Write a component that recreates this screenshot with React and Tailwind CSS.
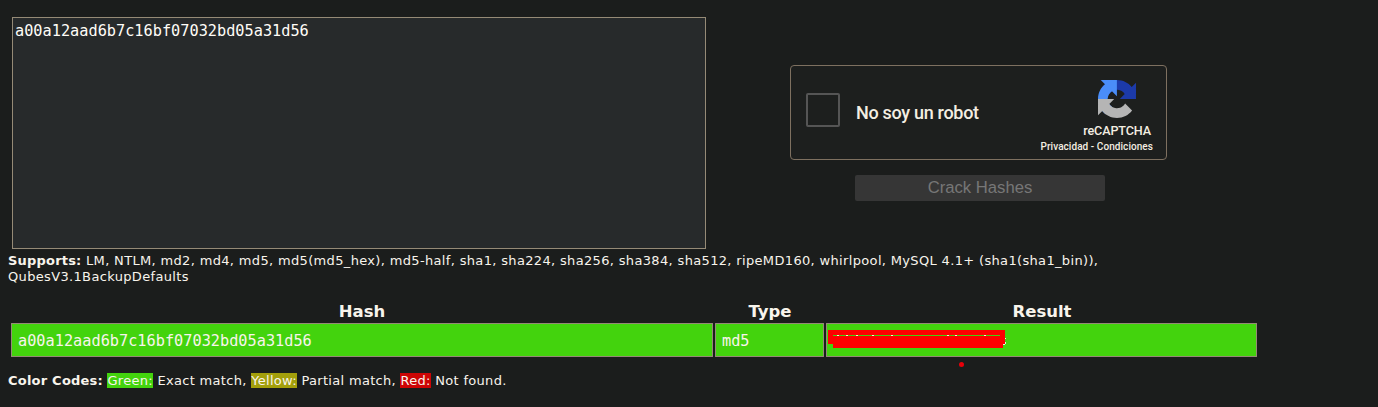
const HASH = "a00a12aad6b7c16bf07032bd05a31d56";
const SPECKS = [837, 846, 856, 872, 891, 947, 955, 984];

function RecaptchaLogo() {
  return (
    <svg className="block h-[38px] w-[38px]" viewBox="0 0 64 64">
      <path fill="#1c3aa9" d="M64 31.955a33 33 0 0 0-.037-1.377V4.687l-7.158 7.158C50.947 4.674 42.033.093 32.05.093c-10.389 0-19.618 4.96-25.458 12.64l11.733 11.856a15.55 15.55 0 0 1 4.754-5.334c2.05-1.6 4.952-2.906 8.968-2.906.485 0 .86.057 1.135.163 4.976.393 9.288 3.14 11.828 7.124l-8.306 8.306L64 31.9" />
      <path fill="#4a8df8" d="M31.862.094a33 33 0 0 0-1.377.037H4.594l7.158 7.158C4.581 13.147 0 22.061 0 32.045c0 10.388 4.96 19.618 12.64 25.458l11.856-11.733a15.55 15.55 0 0 1-5.334-4.754c-1.6-2.05-2.906-4.952-2.906-8.968 0-.485.057-.86.163-1.135.393-4.976 3.14-9.288 7.124-11.828l8.306 8.306L31.807.094" />
      <path fill="#b5b5b5" d="M0 32.045a33 33 0 0 0 .037 1.377v25.891l7.158-7.158c5.858 7.171 14.772 11.752 24.755 11.752 10.389 0 19.618-4.96 25.458-12.64L45.675 39.411a15.55 15.55 0 0 1-4.754 5.334c-2.05 1.6-4.952 2.906-8.968 2.906-.485 0-.86-.057-1.135-.163-4.976-.393-9.288-3.14-11.828-7.124l8.306-8.306L0 32.1" />
    </svg>
  );
}

function Redaction() {
  return (
    <svg className="absolute left-px top-[6px] h-[20px] w-[182px]" viewBox="828 330 182 20" shapeRendering="crispEdges">
      <path fill="#ff0000" d="M828 330h177v14h-2v4H833v-4h-5z" />
      <path fill="#43d30d" d="M833 335h167v1H833z" />
      {SPECKS.map((x) => (
        <path key={x} fill="#fff0d0" d={`M${x} 335h2v1h-2z`} />
      ))}
      <path fill="#e8f5d8" d="M1003 345h2v-1h1v-2h-1v2h-2zM1005 338h1v1h-1z" />
    </svg>
  );
}

export default function App() {
  return (
    <div className="h-[407px] w-[1378px] overflow-hidden bg-[#1b1d1c] pl-2 pt-[17px] font-['DejaVu_Sans',sans-serif] text-[#f8f4ec]">
      <div className="flex h-[232px]">
        <textarea
          readOnly
          spellCheck={false}
          defaultValue={HASH}
          className="ml-1 block h-[232px] w-[694px] resize-none border border-[#958a76] bg-[#272a2b] px-[2px] pt-[3px] font-['DejaVu_Sans_Mono',monospace] text-[15.25px] leading-[20px] text-[#fffdf8] outline-none"
        />
        <div className="ml-[84px] mt-12 w-[377px]">
          <div className="flex h-[95px] rounded-[4px] border border-[#7e7060] bg-[#1d1f1e] font-[Roboto,sans-serif] text-[#f4eee2]">
            <div className="ml-[15px] mt-[27px] h-[34px] w-[34px] rounded-[2px] border-2 border-[#555555]" />
            <div className="ml-4 mt-[35px] w-[150px] whitespace-nowrap text-[18px] font-medium leading-6 tracking-[-0.3px]">No soy un robot</div>
            <div className="ml-auto mr-[13px] mt-[14px] flex w-[130px] flex-col items-end">
              <div className="mr-[17px]"><RecaptchaLogo /></div>
              <div className="mr-[2px] mt-[5px] whitespace-nowrap text-[12.6px] font-medium leading-4 tracking-[-0.12px]">reCAPTCHA</div>
              <div className="mt-[1px] whitespace-nowrap text-[10px] font-medium leading-[14px] tracking-[0.06px]">Privacidad - Condiciones</div>
            </div>
          </div>
          <button className="ml-[65px] mt-[15px] block h-[26px] w-[250px] rounded-[2px] bg-[#363636] font-['Liberation_Sans',sans-serif] text-[16.67px] leading-[26px] text-[#777777]">Crack Hashes</button>
        </div>
      </div>
      <p className="mt-[4px] whitespace-nowrap text-[13px] leading-4 tracking-[0.34px]">
        <b className="tracking-[0.2px]">Supports:</b> LM, NTLM, md2, md4, md5, md5(md5_hex), md5-half, sha1, sha224, sha256, sha384, sha512, ripeMD160, whirlpool, MySQL 4.1+ (sha1(sha1_bin)),
        <br />
        QubesV3.1BackupDefaults
      </p>
      <div className="ml-[3px] mt-[17px] grid w-[1246px] grid-cols-[702px_110px_430px] gap-x-[2px] text-center text-[16.5px] font-bold leading-5">
        <div>Hash</div>
        <div>Type</div>
        <div>Result</div>
      </div>
      <div className="ml-[3px] mt-[1px] grid h-[34px] w-[1246px] grid-cols-[702px_109px_431px] gap-x-[2px] font-['DejaVu_Sans_Mono',monospace] text-[15.25px] leading-[30px]">
        <div className="border border-[#958a76] bg-[#43d30d] pl-[6px] pt-[2px]">{HASH}</div>
        <div className="border border-[#958a76] bg-[#43d30d] pl-[6px] pt-[2px]">md5</div>
        <div className="relative border border-[#958a76] bg-[#43d30d]">
          <Redaction />
          <span className="absolute left-[132px] top-[38px] h-[5px] w-[5px] rounded-full bg-[#e8000a]" />
        </div>
      </div>
      <p className="mt-[16px] whitespace-nowrap text-[13px] leading-4 tracking-[0.31px]">
        <b className="tracking-[0.22px]">Color Codes:</b> <span className="bg-[#43d30d]">Green:</span> Exact match, <span className="bg-[#a39f0b]">Yellow:</span> Partial match, <span className="bg-[#cc0505]">Red:</span> Not found.
      </p>
    </div>
  );
}
